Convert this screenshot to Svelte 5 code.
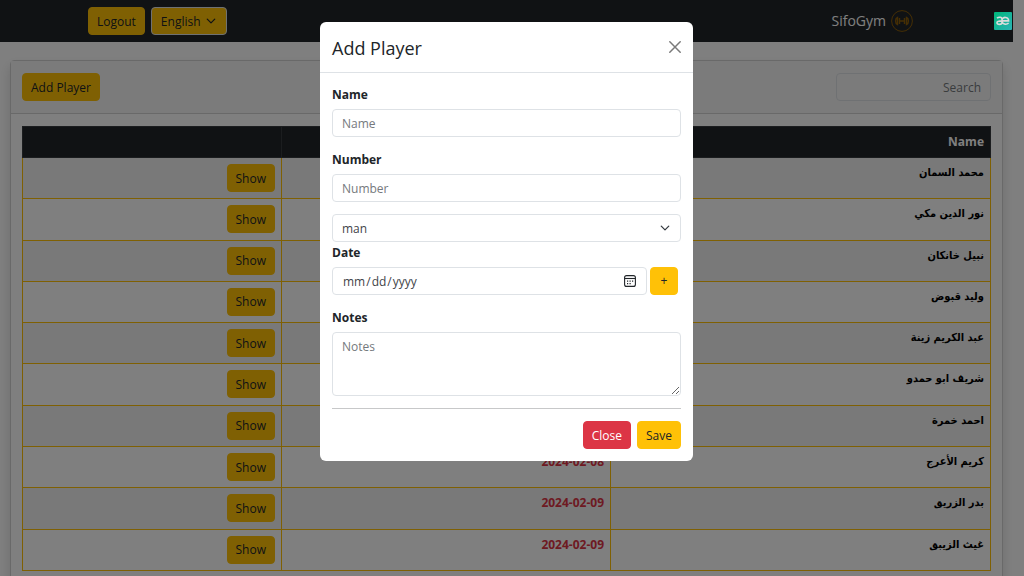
<script lang="ts">
  const players = [
    { name: 'محمد السمان', date: '' },
    { name: 'نور الدين مكي', date: '' },
    { name: 'نبيل خانكان', date: '' },
    { name: 'وليد قبوض', date: '' },
    { name: 'عبد الكريم زينة', date: '' },
    { name: 'شريف ابو حمدو', date: '' },
    { name: 'احمد خمرة', date: '' },
    { name: 'كريم الأعرج', date: '2024-02-08' },
    { name: 'بدر الزريق', date: '2024-02-09' },
    { name: 'غيث الزيبق', date: '2024-02-09' }
  ];
</script>

<div class="page" dir="rtl">
  <header class="navbar">
    <a class="brand" href="#home">
      <svg width="22" height="22" viewBox="0 0 22 22" fill="none" stroke="#8a5c08" aria-hidden="true">
        <circle cx="11" cy="11" r="10.400" stroke-width="1" />
        <path d="M6.500 7.500c-2.600 1-2.600 6 0 7V7.500zM8.500 8v6M15.500 7.500c2.600 1 2.600 6 0 7V7.500zM13.500 8v6M8.500 11h5" stroke-width="1.400" />
      </svg>
      <span>SifoGym</span>
    </a>
    <div class="nav-actions">
      <span class="select-wrap">
        <select class="lang" aria-label="Language" dir="ltr"><option>English</option></select>
        <svg class="chevron" width="10" height="10" viewBox="0 0 16 16" fill="none" stroke="#212529" stroke-width="2" stroke-linecap="round" stroke-linejoin="round" aria-hidden="true"><path d="m2 5 6 6 6-6" /></svg>
      </span>
      <button class="btn warning">Logout</button>
    </div>
  </header>

  <main class="card">
    <div class="card-header">
      <input class="control search" type="text" placeholder="Search" aria-label="Search" />
      <button class="btn warning">Add Player</button>
    </div>
    <div class="card-body">
      <table>
        <colgroup><col class="col-name" /><col class="col-date" /><col /></colgroup>
        <thead>
          <tr><th>Name</th><th></th><th></th></tr>
        </thead>
        <tbody>
          {#each players as player}
            <tr>
              <td class="name">{player.name}</td>
              <td class="date">{player.date}</td>
              <td><button class="btn warning">Show</button></td>
            </tr>
          {/each}
        </tbody>
      </table>
    </div>
  </main>
</div>

<div class="backdrop">
  <div class="modal" role="dialog" aria-modal="true" aria-labelledby="modal-title">
    <div class="modal-header">
      <h1 id="modal-title">Add Player</h1>
      <button class="dismiss" aria-label="Close">
        <svg width="12" height="12" viewBox="0 0 12 12" fill="none" stroke="#7a7a7a" stroke-width="1.500" stroke-linecap="round"><path d="m.8.8 10.400 10.400M11.200.8.8 11.200" /></svg>
      </button>
    </div>
    <form class="modal-body">
      <div class="field spaced">
        <label for="name">Name</label>
        <input id="name" class="control" type="text" placeholder="Name" />
      </div>
      <div class="field spaced">
        <label for="number">Number</label>
        <input id="number" class="control" type="text" placeholder="Number" />
      </div>
      <span class="select-wrap">
        <select class="control" aria-label="Gender"><option>man</option></select>
        <svg class="chevron" width="10" height="10" viewBox="0 0 16 16" fill="none" stroke="#343a40" stroke-width="2" stroke-linecap="round" stroke-linejoin="round" aria-hidden="true"><path d="m2 5 6 6 6-6" /></svg>
      </span>
      <div class="field spaced">
        <label for="date">Date</label>
        <div class="date-row">
          <span class="date-wrap">
            <input id="date" class="control" type="date" />
            <svg class="calendar" width="12" height="12" viewBox="0 0 12 12" aria-hidden="true">
              <rect x=".6" y=".6" width="10.800" height="10.800" rx="2" fill="none" stroke="#212529" stroke-width="1.100" />
              <path d="M.6 3.500h10.800" stroke="#212529" stroke-width="1.100" />
              <path d="M5.500 5.500h1.200v1.200H5.500zM8 5.500h1.200v1.200H8zM3 5.500h1.200v1.200H3zM3 8h1.200v1.200H3zM5.500 8h1.200v1.200H5.500z" fill="#212529" />
            </svg>
          </span>
          <button type="button" class="btn warning plus">+</button>
        </div>
      </div>
      <div class="field spaced">
        <label for="notes">Notes</label>
        <textarea id="notes" class="control" placeholder="Notes"></textarea>
      </div>
      <hr />
      <div class="actions">
        <button type="button" class="btn danger">Close</button>
        <button type="button" class="btn warning">Save</button>
      </div>
    </form>
  </div>
</div>

<div class="badge">
  <svg width="18" height="18" viewBox="0 0 18 18" aria-hidden="true">
    <defs><linearGradient id="g" x2="1" y2="1"><stop stop-color="#00b67a" /><stop offset="1" stop-color="#2bb3b5" /></linearGradient></defs>
    <rect width="18" height="18" rx="1" fill="url(#g)" />
    <path d="M3 6.200c1.500-1.300 5-1.600 5 1v3.300c0 2.300-5 2.600-5 .3 0-1.900 2.500-1.900 5-1.900h6.600c.3-4.600-6.600-4.600-6.600-.2 0 3.900 4.500 4.300 6.600 2.300" fill="none" stroke="#dcdcdc" stroke-width="1.600" />
  </svg>
</div>

<style>
  :global(body) {
    overflow: hidden;
    background: #fff;
    font-family: "Open Sans", "Noto Sans", sans-serif;
    font-size: 12px;
    line-height: 18px;
    color: #212529;
  }
  * { box-sizing: border-box; }
  button, input, select, textarea { font: inherit; color: inherit; margin: 0; }

  .page { padding-right: 11px; }
  .navbar {
    display: flex;
    align-items: center;
    justify-content: space-between;
    height: 42px;
    padding: 0 100px 0 88px;
    background: #212529;
  }
  .brand {
    display: flex;
    align-items: center;
    gap: 5px;
    font-size: 14px;
    color: #fff;
    text-decoration: none;
  }
  .nav-actions { display: flex; gap: 6px; }

  .btn {
    height: 28px;
    padding: 1px 8px 0;
    border: 1px solid transparent;
    border-radius: 4px;
    white-space: nowrap;
  }
  .warning { background: #ffc107; border-color: #ffc107; }
  .danger { background: #dc3545; border-color: #dc3545; color: #fff; }

  .select-wrap { display: block; position: relative; }
  .lang {
    appearance: none;
    height: 28px;
    width: 76px;
    padding: 1px 9px 0;
    border: 1px solid #dee2e6;
    border-radius: 4px;
    background: #ffc107;
  }
  .chevron { position: absolute; right: 11px; top: 9px; pointer-events: none; }

  .card {
    margin: 18px 10px;
    border: 1px solid #d3d3d3;
    border-radius: 4px;
    box-shadow: 0 6px 12px rgba(0, 0, 0, 0.15);
  }
  .card-header {
    display: flex;
    justify-content: space-between;
    padding: 12px 11px;
    border-bottom: 1px solid #d3d3d3;
    background: #f7f7f7;
  }
  .card-body { padding: 12px 11px; }

  .control {
    display: block;
    width: 100%;
    height: 28px;
    padding: 1px 9px 0;
    border: 1px solid #dee2e6;
    border-radius: 4px;
    background: #fff;
    outline: none;
  }
  .control::placeholder { color: #75797d; opacity: 1; }
  .search { width: 155px; background: transparent; }

  table {
    width: 100%;
    height: 445px;
    border-collapse: collapse;
    table-layout: fixed;
  }
  .col-name { width: 380px; }
  .col-date { width: 329px; }
  th, td { padding: 6px; text-align: right; vertical-align: top; }
  thead { height: 31px; }
  th { border: 1px solid #373b3e; background: #212529; color: #fff; }
  td { border: 1px solid #ffc107; }
  tbody tr:nth-child(odd) { background: #f2f2f2; }
  td .btn { display: block; }
  .name {
    font-family: "DejaVu Sans Condensed", "DejaVu Sans", sans-serif;
    font-size: 11px;
    font-weight: bold;
    color: #000;
  }
  .date { font-weight: bold; color: #dc3545; }

  .backdrop {
    position: fixed;
    inset: 0;
    padding: 22px 11px 0 0;
    background: rgba(0, 0, 0, 0.5);
  }
  .modal {
    max-width: 373px;
    margin: 0 auto;
    border-radius: 6px;
    background: #fff;
  }
  .modal-header {
    display: flex;
    align-items: center;
    justify-content: space-between;
    height: 51px;
    padding: 0 12px;
    border-bottom: 1px solid #dee2e6;
  }
  h1 { margin: 0; padding-top: 2px; font-size: 18px; line-height: 26px; font-weight: 500; }
  .dismiss { display: flex; padding: 0; border: 0; background: none; }
  .modal-body { padding: 13px 12px 12px; }
  .spaced { margin-bottom: 12px; }
  .select-wrap + .field { padding-top: 2px; }
  .spaced + .spaced { padding-top: 2px; }
  label { display: block; margin-bottom: 5px; font-weight: bold; }
  select.control { appearance: none; color: #3f4449; }
  .date-row { display: flex; gap: 3px; padding-right: 3px; }
  .date-wrap { position: relative; flex: 1; }
  input[type="date"] { color: #3f4449; }
  input[type="date"]::-webkit-calendar-picker-indicator { opacity: 0; }
  .calendar { position: absolute; right: 11px; top: 8px; pointer-events: none; }
  .plus { width: 28px; padding: 0; }
  textarea.control { height: 64px; padding: 5px 9px; resize: vertical; }
  hr { margin: 0 0 12px; border: 0; border-top: 1px solid #c7c8c9; }
  .actions { display: flex; justify-content: flex-end; gap: 6px; }

  .badge { position: fixed; top: 12px; right: 12px; display: flex; }
</style>
